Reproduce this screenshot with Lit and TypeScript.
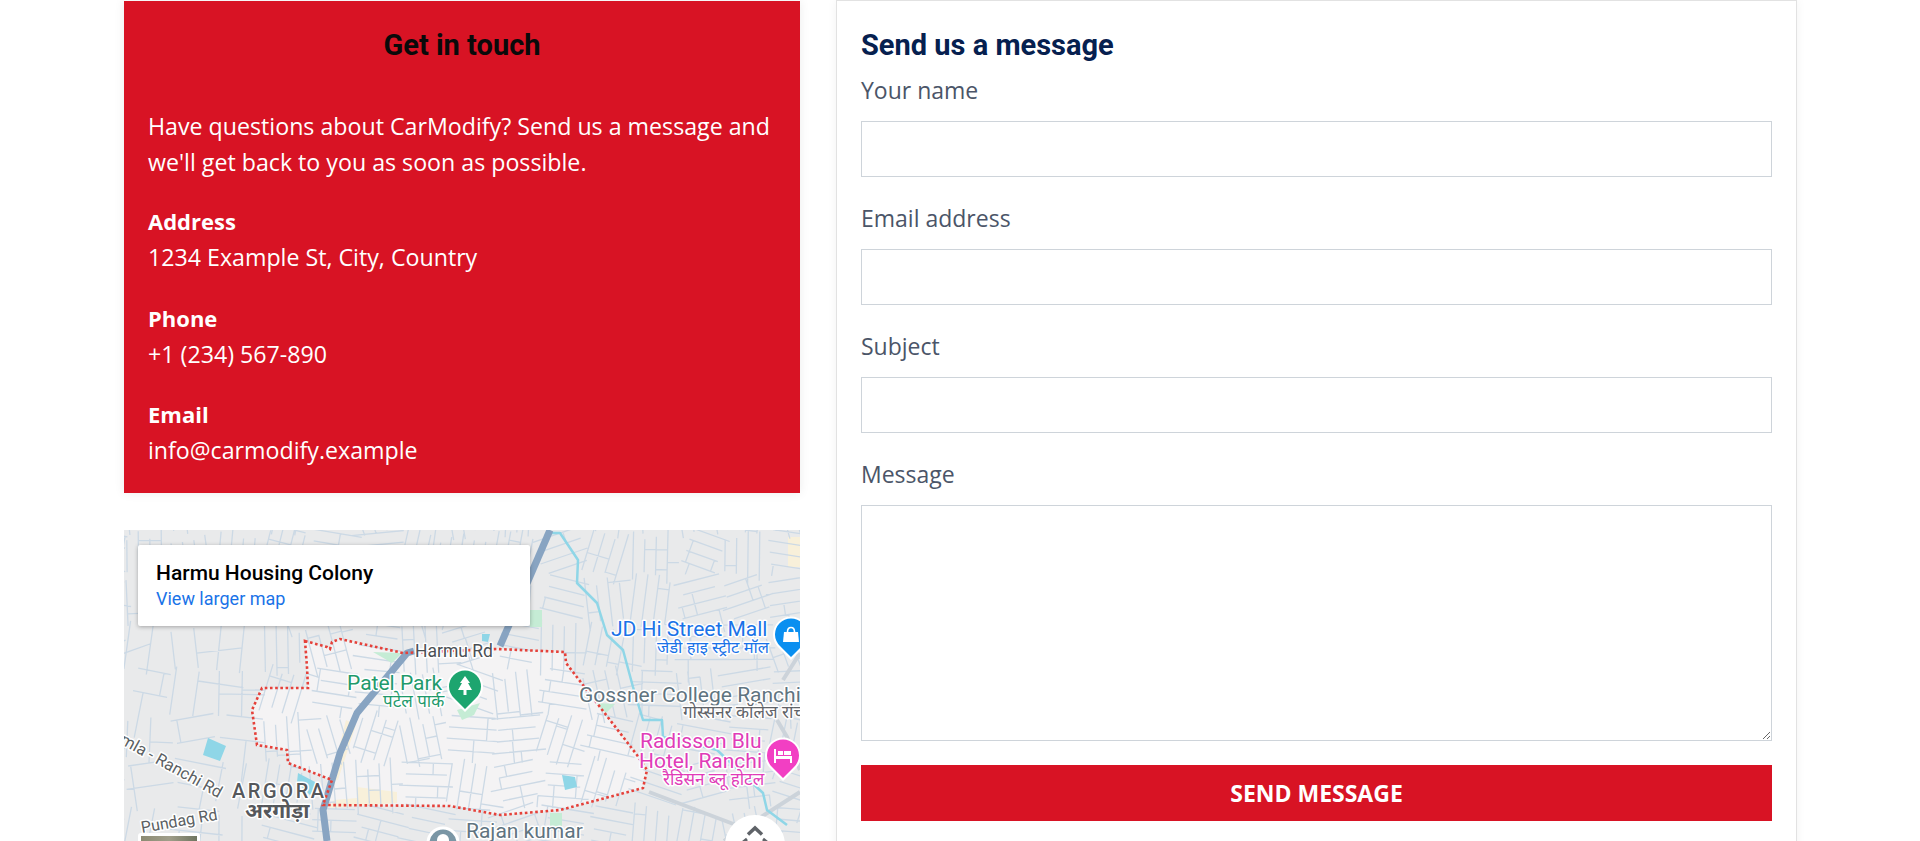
import { LitElement, html, css, svg } from 'lit';
import { customElement } from 'lit/decorators.js';

const FIELDS = ['Your name', 'Email address', 'Subject'];

// boundary of the highlighted area on the map
const AREA =
  'M181 111 L203 117 L206 119 L208 112 L216 109 L279 123 L373 119 L441 122 L442 133 L513 225 L523 240 L519 258 L436 280 L376 285 L326 276 L199 275 L208 250 L164 233 L163 220 L133 215 L128 180 L138 158 L184 158 L183 137 Z';

// street mesh for the map, generated from a fixed seed so it stays stable
function streets() {
  let seed = 23;
  const rnd = () => {
    seed = (seed * 9301 + 49297) % 233280;
    return seed / 233280;
  };
  const parts: string[] = [];
  const step = 46;
  for (let gx = -20; gx < 700; gx += step) {
    for (let gy = -20; gy < 330; gy += step) {
      const sparse = gx < 150 && gy > 60;
      const a = (rnd() - 0.5) * 0.7;
      const ca = Math.cos(a);
      const sa = Math.sin(a);
      const n = sparse ? 2 : 4;
      const gap = step / n;
      const along = rnd() > 0.5;
      for (let i = 0; i < n; i++) {
        const u = i * gap - step / 2;
        const len = 30 + rnd() * 26;
        const sx = gx + (along ? -len / 2 * ca - u * sa : u * ca + (len / 2) * sa);
        const sy = gy + (along ? -len / 2 * sa + u * ca : u * sa - (len / 2) * ca);
        const dx = along ? len * ca : -len * sa;
        const dy = along ? len * sa : len * ca;
        parts.push(`M${sx.toFixed(1)} ${sy.toFixed(1)}l${dx.toFixed(1)} ${dy.toFixed(1)}`);
        if (rnd() > 0.4) {
          const t = rnd();
          const b = gap * (1 + Math.round(rnd()));
          const ex = along ? -b * sa : b * ca;
          const ey = along ? b * ca : b * sa;
          parts.push(`M${(sx + dx * t).toFixed(1)} ${(sy + dy * t).toFixed(1)}l${ex.toFixed(1)} ${ey.toFixed(1)}`);
        }
      }
    }
  }
  return parts.join('');
}

@customElement('map-view')
export class MapView extends LitElement {
  static styles = css`
    :host {
      display: block;
      height: 311px;
      position: relative;
      overflow: hidden;
      background: #e9eaeb;
    }
    .canvas {
      display: block;
      width: 100%;
      height: 100%;
    }
    text {
      font-family: Roboto, 'Noto Sans', sans-serif;
      paint-order: stroke;
      stroke: #fff;
      stroke-width: 3px;
      stroke-linejoin: round;
    }
    .hi {
      font-family: 'Noto Sans', 'DejaVu Sans', sans-serif;
    }
    .info {
      position: absolute;
      left: 14px;
      top: 15px;
      width: 392px;
      height: 81px;
      box-sizing: border-box;
      padding: 15px 18px;
      background: #fff;
      border-radius: 2px;
      box-shadow: 0 1px 4px rgba(0, 0, 0, 0.3);
      font-family: Roboto, sans-serif;
    }
    .place {
      font-size: 21px;
      font-weight: 500;
      color: #000;
      line-height: 26px;
    }
    .larger {
      font-size: 18px;
      color: #1a73e8;
      line-height: 26px;
      display: block;
      text-decoration: none;
    }
    .thumb {
      position: absolute;
      left: 14px;
      top: 303px;
      width: 62px;
      height: 62px;
      box-sizing: border-box;
      background: linear-gradient(90deg, #8b8a72, #a09e8a 50%, #6f7560);
      border: 3px solid #fff;
      border-radius: 3px;
    }
    .zoom-btn {
      position: absolute;
      left: 601px;
      top: 285px;
      width: 60px;
      height: 60px;
      border-radius: 50%;
      background: #fff;
    }
    .zoom-btn svg {
      display: block;
      width: 60px;
      height: 60px;
    }
  `;

  render() {
    return html`
      <svg class="canvas" viewBox="0 0 676 311" preserveAspectRatio="none">
        <path d="${AREA}" fill="#f4f3f4" />
        <path d="M664 7 H676 V37 H664 Z M233 257 L273 262 L273 273 L205 278 L210 270 L233 268 Z M222 190 L232 195 L214 250 L207 250 Z" fill="#f8f0da" />
        <path d="${streets()}" fill="none" stroke="#ccd9e5" stroke-width="1.3" />
        <path d="M525 262 L620 298 M676 262 L620 298 L600 311 M659 150 L676 123 M653 190 L663 207 L676 240" fill="none" stroke="#ccd3da" stroke-width="4" />
        <path d="M249 122 L278 123 L268 133 Z M333 180 L356 173 L350 185 L338 190 Z M473 173 L491 174 L482 183 Z M426 283 L438 283 L438 298 L426 298 Z M406 80 L418 80 L418 97 L406 97 Z" fill="#c5ecd5" />
        <path d="M84 208 L102 216 L96 231 L79 225 Z M174 243 L193 253 L186 265 L173 252 Z M438 245 L451 247 L453 257 L441 260 Z M358 104 L366 104 L364 112 L358 111 Z" fill="#8fd6e7" />
        <path d="M426 3 L436 3 L454 30 L453 53 L473 73 L483 105 L499 120 L509 157 L519 190 L538 190 L539 207 L593 220 L639 263 L643 280 L663 295" fill="none" stroke="#8fd6e7" stroke-width="2.5" stroke-linejoin="round" />
        <path d="M426 0 L376 116" fill="none" stroke="#88a4c2" stroke-width="7" />
        <path d="M290 121 L283 123 L233 183 L216 223 L203 267 L199 280 L203 311" fill="none" stroke="#88a4c2" stroke-width="7" stroke-linejoin="round" />
        <path d="${AREA}" fill="none" stroke="#e5413a" stroke-width="2.6" stroke-dasharray="2.6 2.6" />

        <text x="291" y="127" font-size="17.5" fill="#4a4f54">Harmu Rd</text>
        <text x="223" y="160" font-size="21" fill="#1f9a6c">Patel Park</text>
        <text class="hi" x="259" y="177" font-size="17" fill="#1f9a6c">पटेल पार्क</text>
        <text x="487" y="106" font-size="21" fill="#1a73e8">JD Hi Street Mall</text>
        <text class="hi" x="533" y="123" font-size="16.5" fill="#1a73e8">जेडी हाइ स्ट्रीट मॉल</text>
        <text x="455" y="172" font-size="21" fill="#5f7480">Gossner College Ranchi</text>
        <text class="hi" x="559" y="188" font-size="17" fill="#5f6368">गोस्सनर कॉलेज रांची</text>
        <text x="516" y="218" font-size="21" fill="#e03cb8">Radisson Blu</text>
        <text x="515" y="238" font-size="21" fill="#e03cb8">Hotel, Ranchi</text>
        <text class="hi" x="539" y="255" font-size="17" fill="#e03cb8">रैडिसन ब्लू होटल</text>
        <text x="108" y="268" font-size="20" font-weight="500" letter-spacing="2.6" fill="#55585c">ARGORA</text>
        <text class="hi" x="121" y="288" font-size="21" font-weight="700" fill="#55585c">अरगोड़ा</text>
        <text x="18" y="303" font-size="16" fill="#5b5f63" transform="rotate(-10 18 303)">Pundag Rd</text>
        <text x="-5" y="213" font-size="16.5" fill="#5b5f63" transform="rotate(29 -5 213)">mla - Ranchi Rd</text>
        <text x="342" y="308" font-size="21" fill="#5f7480">Rajan kumar</text>
        <circle cx="319" cy="313" r="15" fill="#7a96a5" stroke="#fff" stroke-width="3" />
        <circle cx="319" cy="310" r="6" fill="#fff" />

        ${this.pin(341, 157, '#1da56f', svg`<path d="M0 -11 L5 -4 L3 -4 L7 3 L1.5 3 L1.5 8 L-1.5 8 L-1.5 3 L-7 3 L-3 -4 L-5 -4 Z" fill="#fff" />`)}
        ${this.pin(667, 105, '#0a8ff0', svg`<path d="M-7 -3 H7 L8 7 H-8 Z" fill="#fff" /><path d="M-3.5 -3 C-3.5 -9 3.5 -9 3.5 -3" fill="none" stroke="#fff" stroke-width="1.6" />`)}
        ${this.pin(659, 226, '#f23fc3', svg`<path d="M-9 -7 H-7 V0 H9 V7 H7 V3 H-7 V7 H-9 Z M-5 -5 H0 V-1 H-5 Z M1 -5 H8 V-1 H1 Z" fill="#fff" />`)}
      </svg>
      <div class="info">
        <div class="place">Harmu Housing Colony</div>
        <a class="larger" href="#">View larger map</a>
      </div>
      <div class="thumb"></div>
      <div class="zoom-btn">
        <svg viewBox="0 0 60 60">
          <path d="M23 19.5 L30 13 L37 19.5" fill="none" stroke="#5f6368" stroke-width="3.5" />
          <path d="M17 28 L22 24 M43 28 L38 24" fill="none" stroke="#5f6368" stroke-width="3" />
        </svg>
      </div>
    `;
  }

  private pin(x: number, y: number, color: string, glyph: unknown) {
    return svg`
      <g transform="translate(${x} ${y})">
        <path d="M0 25 L-13 12 A18 18 0 1 1 13 12 Z" fill="#fff" />
        <path d="M0 22 L-11 11 A16 16 0 1 1 11 11 Z" fill=${color} />
        ${glyph}
      </g>
    `;
  }
}

@customElement('app-root')
export class AppRoot extends LitElement {
  static styles = css`
    :host {
      display: block;
      height: 841px;
      overflow: hidden;
      background: #fff;
      font-family: 'Open Sans', 'Noto Sans', sans-serif;
    }
    .row {
      display: grid;
      grid-template-columns: 676px 961px;
      gap: 36px;
      padding-left: 124px;
      align-items: start;
    }
    .contact {
      background: #d81324;
      color: #fff;
      padding: 19px 24px 16px;
      height: 492px;
      box-sizing: border-box;
      margin-top: 1px;
      box-shadow: 0 0 10px rgba(0, 0, 0, 0.08);
      line-height: 36px;
    }
    .contact h2 {
      margin: 7px 0 45px;
      text-align: center;
      font: 700 29px/36px Roboto, sans-serif;
      color: #0a0a0a;
    }
    .contact p {
      margin: 0 0 23px;
      font-size: 23.2px;
    }
    .contact dl {
      margin: 0;
    }
    .contact dt {
      font-weight: 700;
      font-size: 22px;
    }
    .contact dd {
      margin: 0 0 24.5px;
      font-size: 23.2px;
    }
    .contact dd:last-child {
      margin-bottom: 0;
    }
    map-view {
      margin-top: 37px;
    }
    .form-card {
      border: 1px solid #e2e2e2;
      box-sizing: border-box;
      height: 860px;
      padding: 23px 24px;
      box-shadow: 0 0 10px rgba(0, 0, 0, 0.05);
    }
    .form-card h2 {
      margin: 0 0 6px;
      font: 700 29px/42px Roboto, sans-serif;
      color: #06204f;
    }
    label {
      display: block;
      font-size: 23px;
      line-height: 36px;
      color: #4b5568;
      margin-bottom: 13px;
    }
    input,
    textarea {
      display: block;
      width: 100%;
      box-sizing: border-box;
      border: 1px solid #ced4da;
      background: #fff;
      border-radius: 0;
      outline: none;
      padding: 0;
      margin: 0;
    }
    input {
      height: 56px;
      margin-bottom: 23px;
    }
    textarea {
      height: 236px;
      margin-bottom: 24px;
    }
    button {
      display: block;
      width: 100%;
      height: 56px;
      border: 0;
      background: #d81324;
      color: #fff;
      font: 700 23px 'Open Sans', sans-serif;
      cursor: pointer;
    }
  `;

  render() {
    return html`
      <div class="row">
        <div>
          <section class="contact">
            <h2>Get in touch</h2>
            <p>Have questions about CarModify? Send us a message and we'll get back to you as soon as possible.</p>
            <dl>
              <dt>Address</dt>
              <dd>1234 Example St, City, Country</dd>
              <dt>Phone</dt>
              <dd>+1 (234) 567-890</dd>
              <dt>Email</dt>
              <dd>info@carmodify.example</dd>
            </dl>
          </section>
          <map-view></map-view>
        </div>
        <section class="form-card">
          <h2>Send us a message</h2>
          ${FIELDS.map((f) => html`<label>${f}</label><input type="text" />`)}
          <label>Message</label>
          <textarea></textarea>
          <button>SEND MESSAGE</button>
        </section>
      </div>
    `;
  }
}
